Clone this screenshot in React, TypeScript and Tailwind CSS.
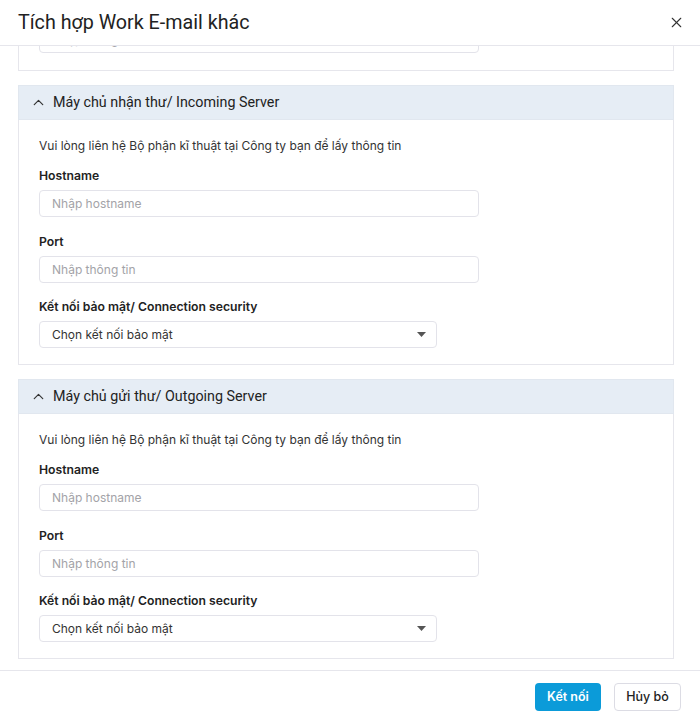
import { X, ChevronUp } from 'lucide-react'

const body = { fontFamily: 'Inter, "Noto Sans", sans-serif' }
const roboto = { fontFamily: 'Roboto, "Noto Sans", sans-serif' }

function TextInput({ placeholder }: { placeholder: string }) {
  return (
    <div className="flex h-[27px] w-[440px] items-center rounded-[4px] border border-[#e3e3ea] bg-white px-3 text-[12px] text-[#a3a3a8]">
      {placeholder}
    </div>
  )
}

function SelectBox() {
  return (
    <div className="flex h-[27px] w-[398px] items-center justify-between rounded-[4px] border border-[#e3e3ea] bg-white pl-3 pr-[10px] text-[12px] text-[#333]">
      <span>Chọn kết nối bảo mật</span>
      <svg width="9" height="5" viewBox="0 0 9 5">
        <path d="M0 0h9L4.5 5z" fill="#555" />
      </svg>
    </div>
  )
}

function ServerSection({ title }: { title: string }) {
  return (
    <div className="mt-[14px]">
      <div
        className="flex h-[35px] items-center gap-[6px] border border-[#e1e7ef] bg-[#e6edf5] pl-[11px] text-[14.3px] text-[#222]"
        style={roboto}
      >
        <ChevronUp size={17} strokeWidth={1.7} className="text-[#333]" />
        <span>{title}</span>
      </div>
      <div className="border-x border-b border-[#e6e6ec] pb-[16px] pl-[20px] pt-[17px] text-[12px] leading-[18px] text-[#333]">
        <div>Vui lòng liên hệ Bộ phận kĩ thuật tại Công ty bạn để lấy thông tin</div>
        <div className="mt-[12px] text-[12.2px] font-semibold text-[#222]">Hostname</div>
        <div className="mt-[5px]">
          <TextInput placeholder="Nhập hostname" />
        </div>
        <div className="mt-[16px] text-[12.2px] font-semibold text-[#222]">Port</div>
        <div className="mt-[5px]">
          <TextInput placeholder="Nhập thông tin" />
        </div>
        <div className="mt-[15px] text-[12.2px] font-semibold text-[#222]">Kết nối bảo mật/ Connection security</div>
        <div className="mt-[5px]">
          <SelectBox />
        </div>
      </div>
    </div>
  )
}

export default function App() {
  return (
    <div className="flex h-[717px] w-[700px] flex-col overflow-hidden bg-white" style={body}>
      {/* Header */}
      <div className="flex h-[46px] shrink-0 items-center justify-between border-b border-[#e6e6ec] pl-[18px] pr-[15px]">
        <span className="text-[19.7px] text-[#222]" style={roboto}>
          Tích hợp Work E-mail khác
        </span>
        <X size={17} strokeWidth={1.5} className="text-[#333]" />
      </div>

      {/* Scrolled content */}
      <div className="flex-1 overflow-hidden px-[18px] pr-[26px]">
        <div className="border-x border-b border-[#e6e6ec] pb-[17px] pl-[20px]">
          <div className="-mt-[20px] flex h-[27px] w-[440px] items-center rounded-[4px] border border-[#e3e3ea] px-3 text-[12px] text-[#a3a3a8]">
            Nhập thông tin
          </div>
        </div>
        <ServerSection title="Máy chủ nhận thư/ Incoming Server" />
        <ServerSection title="Máy chủ gửi thư/ Outgoing Server" />
      </div>

      {/* Footer */}
      <div className="flex h-[47px] shrink-0 items-start justify-end gap-[13px] border-t border-[#e6e6ec] pr-[19px] pt-[12px]">
        <button className="h-[28px] w-[66px] rounded-[4px] bg-[#0b9bd9] text-[12.5px] font-semibold text-white">
          Kết nối
        </button>
        <button className="h-[28px] w-[67px] rounded-[4px] border border-[#dcdce4] bg-white text-[12.5px] font-medium text-[#222]">
          Hủy bỏ
        </button>
      </div>
    </div>
  )
}
